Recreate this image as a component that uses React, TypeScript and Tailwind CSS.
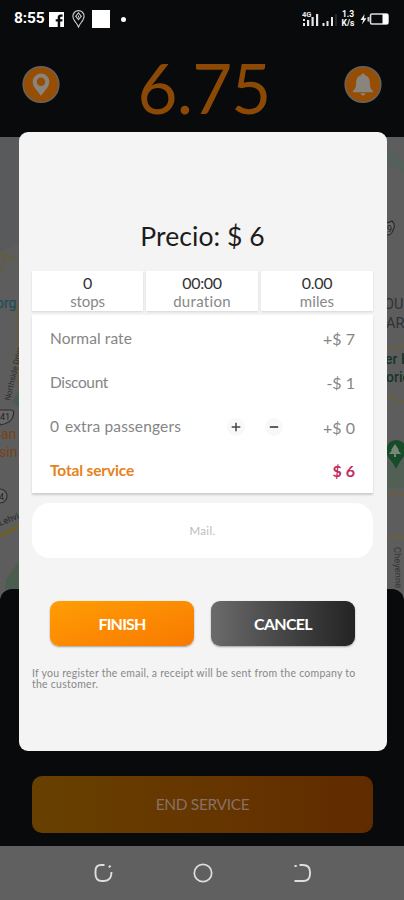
import React from 'react';

const stats = [
  { value: '0', label: 'stops', box: 'w-[111px]', track: 'tracking-[-0.1px]' },
  { value: '00:00', label: 'duration', box: 'w-[112px]', track: 'tracking-[0.3px]' },
  { value: '0.00', label: 'miles', box: 'w-[112px]', track: 'tracking-[0.1px]' },
];

const StatusBar: React.FC = () => (
  <div className="flex h-9 items-center justify-between pt-[2px] pl-[14px] pr-[14px] text-white">
    <div className="flex items-center">
      <span className="w-[35px] whitespace-nowrap font-['Roboto'] text-[15.5px] font-bold leading-none tracking-[-0.1px]">8:55</span>
      <svg width="15" height="15" viewBox="0 0 15 15">
        <path fill="#fff" d="M0 0h15v15h-3.8V9.4h2.1l.3-2.2h-2.4V5.8c0-.7.3-1.1 1.1-1.1h1.3V2.6h-1.9C9.7 2.6 8.7 3.8 8.7 5.6v1.6H6.7v2.2h2V15H0z" />
      </svg>
      <svg className="ml-[8px]" width="13" height="18" viewBox="0 0 13 18" fill="none" stroke="#ccc" strokeWidth="1.1">
        <path d="M6.5 17C5.5 13.5.9 10.5.9 6.2a5.600 5.600 0 0 1 11.200 0C12.100 10.500 7.500 13.500 6.500 17z" />
        <path d="m6.5 2.800 2.800 3.400-2.800 3.400-2.800-3.400z" />
        <path d="M6.500 5.500v2" />
      </svg>
      <div className="ml-[7px] h-[18px] w-[18px] bg-white" />
      <div className="ml-[11px] h-[5px] w-[5px] rounded-full bg-white" />
    </div>
    <div className="flex items-center font-['Roboto'] font-bold">
      <svg width="36" height="18" viewBox="0 0 36 18" fill="#e8e8e8">
        <text x="0" y="6.5" fontSize="7.5" fontWeight="700">4G</text>
        <path d="M1 13h2v3H1zM1 9h2v2H1zM5 10h2.200v6H5zM9.500 7h2.200v9H9.500zM14 4h2.200v12H14z" />
        <path d="M20.500 13h2v3h-2zM24.500 11h2v5h-2zM29 7h2v9h-2z" />
        <path fill="#444" d="M33.500 4h1v12h-1z" />
      </svg>
      <div className="ml-[2px] flex w-[16px] flex-col items-center text-[8.5px] leading-[9px]">
        <span>1.3</span>
        <span>K/s</span>
      </div>
      <svg className="ml-[4px]" width="30" height="14" viewBox="0 0 30 14">
        <path fill="#eee" d="M4.500 2 .500 8h2.600L2 12.500 6.500 6.300H4z" />
        <path fill="#ccc" d="M7.500 5h2v4.500h-2z" />
        <rect x="10.500" y="2" width="17.500" height="10" rx="1.500" fill="none" stroke="#ddd" strokeWidth="1.600" />
        <path fill="#fff" d="M22.500 2H28v10h-5.500z" />
      </svg>
    </div>
  </div>
);

const MapView: React.FC = () => (
  <svg className="block h-[462px] w-full bg-[#5d5d5d]" viewBox="0 137 404 462" fontFamily="Roboto, sans-serif">
    <defs>
      <clipPath id="leftStrip"><path d="M0 137h19v462H0z" /></clipPath>
      <clipPath id="rightStrip"><path d="M386 137h18v462h-18z" /></clipPath>
    </defs>
    <g clipPath="url(#leftStrip)">
      <path d="M0 137h19v105L0 252z" fill="#595a5c" />
      <path d="M0 254 19 261M0 274l7-22M17 305v80" stroke="#625d49" strokeWidth="3" fill="none" />
      <path d="m12 402 7-12v18zM6 580l13-19v28H5z" fill="#4b5d4e" />
      <path d="M0 536 19 526" stroke="#6e5f31" strokeWidth="4" />
      <text x="-4" y="308" fontSize="14" fill="#174c57">org</text>
      <text transform="translate(10 401) rotate(-77)" fontSize="8" fill="#2d2d2d">Northside Drive</text>
      <path d="M-3 410h14q4 0 2 6-1 7-13 9z" fill="#686868" stroke="#2c2c2c" strokeWidth="1.2" />
      <text x="0" y="420" fontSize="9" fill="#222">41</text>
      <text x="1" y="439" fontSize="14" fill="#784218">an</text>
      <text x="-1" y="457" fontSize="14" fill="#784218">sin</text>
      <circle cx="0" cy="496" r="7" fill="#686868" stroke="#2c2c2c" strokeWidth="1.2" />
      <text x="-1" y="500" fontSize="9" fill="#222">4</text>
      <text transform="translate(0 526) rotate(-21)" fontSize="9" fill="#292929">Lehvi</text>
    </g>
    <g clipPath="url(#rightStrip)">
      <path d="m387 148 17 12v14l-17-10z" fill="#56605a" />
      <path d="M387 349l17-3M387 397l17 5M387 494h17M387 537h17" stroke="#665f48" strokeWidth="3" />
      <path d="M387 462h17v26h-17z" fill="#525f55" />
      <path d="M382 222q5 2 10-1 4 4 1 9-1 5-6 5-6-1-7-7z" fill="#686868" stroke="#292929" strokeWidth="1.2" />
      <text x="387" y="232" fontSize="9" fill="#222">9</text>
      <text x="384" y="309" fontSize="14.5" fill="#303234">OUN</text>
      <text x="386" y="328" fontSize="14.5" fill="#303234">ARD</text>
      <text x="385" y="364" fontSize="14" fontWeight="500" fill="#143528">er K</text>
      <text x="386" y="382" fontSize="14" fontWeight="500" fill="#143528">oric</text>
      <path d="M387 447q1-6 9-7 7 0 10 7c2 8-6 12-10 22-3-8-9-10-9-16z" fill="#164d28" />
      <path d="m395 444 4 6h-1l3 4h-5v3h-2v-3h-5l3-4h-1z" fill="#798679" />
      <text transform="translate(394 547) rotate(88)" fontSize="9.5" fill="#353535">Cheyenne</text>
    </g>
  </svg>
);

const RideScreen: React.FC = () => (
  <div className="flex h-full flex-col bg-[#080a0c]">
    <StatusBar />
    <div className="flex h-[101px] shrink-0 items-start justify-between px-[22px]">
      <svg className="mt-[29px]" width="38" height="39" viewBox="0 0 38 39">
        <circle cx="19" cy="19.5" r="17.8" fill="#964e04" stroke="#68615b" strokeWidth="1.6" />
        <path fill="#89847e" fillRule="evenodd" d="M19 8.500a8.300 8.300 0 0 0-8.300 8.300c0 5.600 5.300 9.200 8.300 14.200 3-5 8.300-8.600 8.300-14.200A8.300 8.300 0 0 0 19 8.500zm0 4a4.300 4.300 0 1 1 0 8.600 4.300 4.300 0 0 1 0-8.600z" />
      </svg>
      <h1 className="mt-[17px] pl-[4px] font-['Lato'] text-[69px] font-normal leading-[70px] tracking-[-0.8px] text-[#8b4905]">6.75</h1>
      <svg className="mt-[29px]" width="38" height="39" viewBox="0 0 38 39">
        <circle cx="19" cy="19.5" r="17.8" fill="#964e04" stroke="#68615b" strokeWidth="1.6" />
        <path fill="#89847e" d="M19 8.500c-1.200 0-1.900.7-1.900 1.800-3.500 1-5 3.900-5 7.500 0 4.500-.8 6.300-3.100 8.200v1.200h20V26c-2.300-1.900-3.100-3.700-3.100-8.200 0-3.600-1.500-6.500-5-7.500 0-1.100-.7-1.800-1.900-1.800zM16.700 28.300h4.600a2.300 2.300 0 0 1-4.600 0z" />
      </svg>
    </div>
    <div className="h-[462px] shrink-0">
      <MapView />
    </div>
    <div className="z-10 -mt-[10px] flex h-[257px] shrink-0 items-end rounded-t-xl bg-[#080a0c] px-8 pb-[13px]">
      <button className="h-[57px] w-[341px] shrink-0 rounded-[10px] bg-linear-to-r from-[#674000] via-[#663600] to-[#602b00] font-['Lato'] text-[15.5px] tracking-[-0.35px] text-[#887064]">
        END SERVICE
      </button>
    </div>
    <div className="flex h-[54px] shrink-0 items-center justify-center gap-[80px] bg-[#606060] pl-px">
      <svg width="19" height="20" viewBox="0 0 19 20" fill="none" stroke="#dedede" strokeWidth="1.9">
        <path d="M10.5 2H7Q1.500 2 1.500 8v3q0 7 6.500 7h2q7.500 0 7.500-9" />
        <path d="M14.8 4.300 16.600 2.700" />
      </svg>
      <svg width="20" height="20" viewBox="0 0 20 20" fill="none" stroke="#dedede" strokeWidth="1.7">
        <circle cx="10" cy="10" r="8.7" />
      </svg>
      <svg width="19" height="20" viewBox="0 0 19 20" fill="none" stroke="#dedede" strokeWidth="1.9">
        <path d="M6.500 2H10q7 0 7 7v2q0 7-7 7H1.500M1.500 3h2.200" />
      </svg>
    </div>
  </div>
);

const PriceDialog: React.FC = () => (
  <div className="absolute left-[18.5px] top-[131.5px] z-20 flex h-[619px] w-[368px] flex-col rounded-[9px] bg-[#f4f4f4] px-[13.5px]">
    <h2 className="mt-[87px] text-center text-[26.5px] leading-[34px] tracking-[0.05px] text-[#1c1c1c]">
      Precio: $ 6
    </h2>
    <div className="mt-[18.5px] flex h-[40px] w-[341px] justify-between">
      {stats.map((s) => (
        <div key={s.label} className={`flex flex-col items-center bg-white pt-[2px] shadow-[0_1px_2px_rgba(0,0,0,0.12)] ${s.box}`}>
          <span className="text-[16px] leading-[19px] tracking-[-0.3px] text-[#333]">{s.value}</span>
          <span className={`text-[15px] leading-[18px] text-[#888] ${s.track}`}>{s.label}</span>
        </div>
      ))}
    </div>
    <div className="mt-[4px] flex h-[178px] w-[341px] flex-col bg-white px-[18px] pt-px text-[15.5px] text-[#858585] shadow-[0_2px_2px_rgba(0,0,0,0.16)]">
      <div className="flex flex-1 items-center justify-between">
        <span className="tracking-[0.1px]">Normal rate</span>
        <span className="pt-[2px] text-[16px]">+$ 7</span>
      </div>
      <div className="flex flex-1 items-center justify-between">
        <span className="tracking-[-0.35px]">Discount</span>
        <span className="pt-[2px] text-[16px]">-$ 1</span>
      </div>
      <div className="flex flex-1 items-center">
        <span className="w-[15px]">0</span>
        <span className="w-[162px] tracking-[0.15px]">extra passengers</span>
        <button className="flex h-[18px] w-[18px] items-center justify-center rounded-full bg-[#f8f8f8]">
          <svg width="10" height="10" viewBox="0 0 10 10" stroke="#444" strokeWidth="1.5"><path d="M5 .7v8.600M.700 5h8.600" /></svg>
        </button>
        <button className="ml-[20px] flex h-[18px] w-[18px] items-center justify-center rounded-full bg-[#f8f8f8]">
          <svg width="10" height="10" viewBox="0 0 10 10" stroke="#444" strokeWidth="1.7"><path d="M.8 5h8.400" /></svg>
        </button>
        <span className="ml-auto pt-[2px] text-[16px]">+$ 0</span>
      </div>
      <div className="flex flex-1 items-center justify-between font-bold">
        <span className="tracking-[-0.15px] text-[#e4831b]">Total service</span>
        <span className="pt-px text-[16px] text-[#c32c5e]">$ 6</span>
      </div>
    </div>
    <div className="mt-[10px] flex h-[55px] w-[341px] shrink-0 items-center justify-center rounded-[18px] bg-white text-[11.5px] tracking-[0.3px] text-[#bbb]">
      Mail.
    </div>
    <div className="mt-[43px] flex h-[45px] shrink-0 gap-[17px] pl-[18px] text-[16px] font-bold text-white">
      <button className="w-[144px] rounded-[9px] bg-linear-to-br from-[#ff9d05] to-[#f87900] tracking-[-0.8px] shadow-[0_1px_2px_rgba(0,0,0,0.35)]">FINISH</button>
      <button className="w-[144px] rounded-[9px] bg-linear-to-r from-[#6b6b6b] to-[#242424] tracking-[-0.7px] shadow-[0_1px_2px_rgba(0,0,0,0.35)]">CANCEL</button>
    </div>
    <p className="mt-[22px] whitespace-nowrap text-[10.5px] leading-[11px] tracking-[0.25px] text-[#888]">
      If you register the email, a receipt will be sent from the company to
      <br />
      the customer.
    </p>
  </div>
);

const App: React.FC = () => (
  <div className="relative h-[900px] w-[404px] overflow-hidden font-['Lato',sans-serif]">
    <RideScreen />
    <PriceDialog />
  </div>
);

export default App;
